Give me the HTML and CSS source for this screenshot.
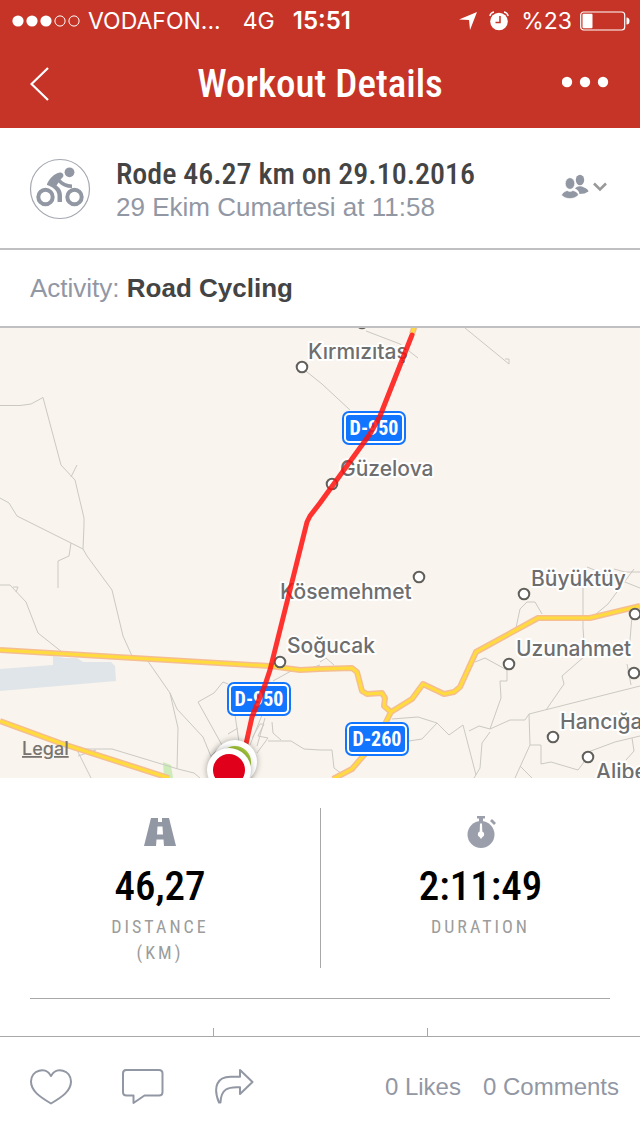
FILE: index.html
```html
<!DOCTYPE html>
<html lang="en">
<head>
<meta charset="utf-8">
<meta name="viewport" content="width=device-width, initial-scale=1">
<title>Workout Details</title>
<link rel="stylesheet" href="styles.css">
</head>
<body>
<div class="app">
  <header class="topbar">
    <div class="status">
      <svg class="signal" width="68" height="12" viewBox="0 0 68 12" aria-hidden="true">
        <g fill="#fff"><circle cx="6" cy="6" r="5.6"/><circle cx="20" cy="6" r="5.6"/><circle cx="34" cy="6" r="5.6"/></g>
        <g fill="none" stroke="#fff"><circle cx="48" cy="6" r="5.1"/><circle cx="62" cy="6" r="5.1"/></g>
      </svg>
      <span class="carrier">VODAFON...</span>
      <span class="network">4G</span>
      <span class="time">15:51</span>
      <svg class="location" width="18" height="18" viewBox="0 0 18 18" aria-hidden="true"><path d="M18 0 11 18 10 8 0 7.5Z" fill="#fff"/></svg>
      <svg class="alarm" width="20" height="20" viewBox="0 0 20 20" aria-hidden="true">
        <circle cx="10" cy="10.5" r="8.8" fill="#fff"/>
        <path d="M.8 5C1.300 3 3 1.300 5 1M19.200 5C18.700 3 17 1.300 15 1" fill="none" stroke="#fff" stroke-width="1.300"/>
        <path d="M11 5v6.500H6.500" fill="none" stroke="#c63427" stroke-width="1.500"/>
      </svg>
      <span class="percent">%23</span>
      <svg class="battery" width="50" height="20" viewBox="0 0 50 20" aria-hidden="true">
        <rect x=".7" y="1" width="44" height="18" rx="3" fill="none" stroke="#fff" stroke-width="1.200"/>
        <rect x="2.500" y="2.800" width="10" height="14.500" rx="1" fill="#fff"/>
        <path d="M46.500 6.500a3 3.500 0 0 1 0 7Z" fill="#fff"/>
      </svg>
    </div>
    <div class="nav">
      <button class="icon-button" aria-label="Back">
        <svg width="20" height="34" viewBox="0 0 20 34"><path d="M18 1 1.500 17 18 33" fill="none" stroke="#fff" stroke-width="2.200"/></svg>
      </button>
      <h1 class="title">Workout Details</h1>
      <button class="icon-button more" aria-label="More">
        <svg width="48" height="16" viewBox="0 0 48 16" fill="#fff"><circle cx="5" cy="6" r="5.200"/><circle cx="23" cy="6" r="5.200"/><circle cx="41" cy="6" r="5.200"/></svg>
      </button>
    </div>
  </header>

  <main class="content">
    <section class="summary">
      <svg class="avatar" width="62" height="62" viewBox="0 0 62 62" aria-hidden="true">
        <circle cx="31" cy="31" r="29.500" fill="none" stroke="#a5a8b1" stroke-width="1.200"/>
        <g fill="none" stroke="#9297a4" stroke-width="4"><circle cx="16.500" cy="39" r="7.200"/><circle cx="45.500" cy="39" r="7.200"/></g>
        <circle cx="40.500" cy="14.300" r="4.900" fill="#9297a4"/>
        <path d="M18 26C21 20 25 15.500 31 14.500 34 14.500 35 17 34 19L31.500 21.500C34 24.500 38 26 43 26.500V30C37 30 32.500 28 29.500 24.500L27.500 27.500C31 30 33 33 33 38V44H28.500V37C28 32 24 29 18 27Z" fill="#9297a4"/>
      </svg>
      <div class="summary-text">
        <h2 class="workout-name">Rode 46.27 km on 29.10.2016</h2>
        <p class="workout-date">29 Ekim Cumartesi at 11:58</p>
      </div>
      <button class="icon-button" aria-label="Privacy: friends">
        <svg width="48" height="30" viewBox="0 0 48 30">
          <g fill="#9297a4"><ellipse cx="19" cy="6" rx="4.200" ry="5.200"/><path d="M15 13.500Q19 11 23 13.500 27 15 27.500 17.500 24 20 18.500 20 18 16 14 14.500Z"/></g>
          <g fill="#9297a4" stroke="#fff" stroke-width=".6"><ellipse cx="9" cy="9.500" rx="4.700" ry="5.800"/><path d="M.5 21C2 18 4 17.500 6 16.500Q9 18.500 12 16.500C15 17.500 17 18.500 17.500 21 13 26 4 25.500.5 21Z"/></g>
          <path d="M33 9.500 39 15.500 45 9.500" fill="none" stroke="#999" stroke-width="2.600"/>
        </svg>
      </button>
    </section>

    <p class="activity">Activity: <strong>Road Cycling</strong></p>

    <svg class="map" viewBox="0 328 640 450" role="img" aria-label="Route map">
      <path d="M0 669 53 665V656L65 658H77L83 662H111L115 666 116 681 0 691Z" fill="#e0e5e9"/>
      <path d="M163 762 171 765 173 778H164Z" fill="#cdecb9"/>
      <g class="lane">
        <path d="M0 405.500H20L31 404 43 397.500 61 465 75 480 84 518V525L83 549 87 556 112 590 123 636 132 656M71 477 77 465M0 498 9 503 17 516 83 549M71 543 69 556 58 561V588"/>
        <path d="M0 585H10L26 602 38 633 62 652M13 587H18L16 592M145 657 170 693 178 728 177 769M170 693 177 709 203 737 212 759M91 778 78 752 80 749 96 749H112L178 769 194 773 200 778M78 756 96 750M243 778 246 740"/>
        <path d="M222 745 198 702 214 693 223 682 228 684M222 745 211 756M235 715 239 742M228 734 238 728M273 681 291 671M320 665 305 670M262 715 250 745M265 718 257 746M252 738 260 724H264L258 736 268 738 257 753M272 722 273 733 281 740M268 741 291 741 304 749 320 750"/>
        <path d="M302 368 322 384 350 410M366 331 400 344 418 358M465 328 509 364V359H505"/>
        <path d="M516 628 520 609 527 602H535L542 614M583 571V628L585 656 562 676 564 684 546 710M587 567 640 588M640 572H625L614 569M596 614 608 604 634 569M632 616 630 640 627 650M627 664 631 685M320 662 326 658 334 665M475 662 485 658 507 670V681H500L501 698 490 729M392 719 418 717 437 723 449 735 463 725 476 775M409 741 422 739 437 723M469 731 479 726 490 729 510 720H525L529 714 640 686M529 714 530 745 515 778M530 745H541V764L551 762 578 770 587 758M490 732 482 743 480 768 474 778M588 752 615 742 640 736M632 738 634 751 626 760M320 750H332L334 768 342 774M520 766 532 778"/>
      </g>
      <path class="road-edge" d="M0 650 270 666 300 670 320 669 352 668 357 672 362 691 367 694 382 693 385 698 384 706 391 712 412 699 423 684 444 694 454 692 460 687 476 652 538 618H590L640 606M391 712 377 740 352 769 333 779M0 721 60 743 169 778M412 334 415 325"/>
      <path class="road" d="M0 650 270 666 300 670 320 669 352 668 357 672 362 691 367 694 382 693 385 698 384 706 391 712 412 699 423 684 444 694 454 692 460 687 476 652 538 618H590L640 606M391 712 377 740 352 769 333 779M0 721 60 743 169 778M412 334 415 325"/>
      <g class="town">
        <circle cx="302" cy="367" r="5.300"/><circle cx="362" cy="323" r="5.300"/><circle cx="332" cy="484" r="5.300"/><circle cx="419" cy="577" r="5.300"/><circle cx="280" cy="662" r="5.300"/><circle cx="524" cy="594" r="5.300"/><circle cx="635" cy="614" r="5.300"/><circle cx="509" cy="664" r="5.300"/><circle cx="634" cy="673" r="5.300"/><circle cx="553" cy="737" r="5.300"/><circle cx="588" cy="757" r="5.300"/>
      </g>
      <g class="place">
        <text x="308" y="359">Kırmızıtaş</text><text x="340" y="476">Güzelova</text><text x="280" y="599">Kösemehmet</text><text x="287" y="653">Soğucak</text><text x="531" y="586">Büyüktüy</text><text x="516" y="656">Uzunahmet</text><text x="560" y="729">Hancığa</text><text x="596" y="779">Alibe</text>
      </g>
      <g class="shield">
        <rect x="342" y="411" width="64" height="34" rx="7"/><rect class="shield-line" x="345" y="414" width="58" height="28" rx="4"/><text x="374" y="435">D-950</text>
        <rect x="227" y="682" width="64" height="34" rx="7"/><rect class="shield-line" x="230" y="685" width="58" height="28" rx="4"/><text x="259" y="706">D-950</text>
        <rect x="345" y="722" width="64" height="34" rx="7"/><rect class="shield-line" x="348" y="725" width="58" height="28" rx="4"/><text x="377" y="746">D-260</text>
      </g>
      <path class="route" d="M412 335 380 416 370 434 320 503 310 516 307 522 299 554 270 670 265 685 252 717 246 744"/>
      <g class="pin">
        <circle cx="235" cy="762" r="22"/><circle cx="235" cy="762" r="16" fill="#a5c83b"/>
      </g>
      <g class="pin">
        <circle cx="229" cy="770" r="22"/><circle cx="229" cy="770" r="16" fill="#e0001b"/>
      </g>
      <a href="#legal"><text class="legal" x="22" y="755">Legal</text></a>
    </svg>

    <section class="stats">
      <div class="stat">
        <svg width="32" height="32" viewBox="0 0 32 32" aria-hidden="true"><path d="M7 2H25L32 30H0Z" fill="#9297a4"/><path d="M14 2H18V6H14ZM13.500 10.500H18.500L19 18.500H13ZM12.500 23.500H19.500L20 30H12Z" fill="#fff"/></svg>
        <strong class="value">46,27</strong>
        <span class="unit">DISTANCE<br>(KM)</span>
      </div>
      <div class="stat">
        <svg width="32" height="32" viewBox="0 0 32 32" aria-hidden="true"><g fill="#9b9fab"><circle cx="16" cy="18.500" r="13.500"/><path d="M12 0H20V2.500H18V6H14V2.500H12ZM27 3 31 7 29 9 25 5Z"/></g><path d="M15 7.500H17L17.300 15.500A3 3 0 0 1 17.500 21L16 23 14.500 21A3 3 0 0 1 14.700 15.500Z" fill="#fff"/></svg>
        <strong class="value">2:11:49</strong>
        <span class="unit">DURATION</span>
      </div>
    </section>
    <hr class="rule">
    <div class="stats-next"><div></div><div></div><div></div></div>
  </main>

  <footer class="actions">
    <button class="icon-button" aria-label="Like">
      <svg width="42" height="36" viewBox="0 0 42 36"><path d="M21 34.500C10 28 1 22 1 12.500 1 1 16-3 21 7 26-3 41 1 41 12.500 41 22 32 28 21 34.500Z"/></svg>
    </button>
    <button class="icon-button" aria-label="Comment">
      <svg width="42" height="36" viewBox="0 0 42 36"><path d="M4 1H37Q40.500 1 40.500 4.500V23Q40.500 26.500 37 26.500H22.500L11.500 34V26.500H4.500Q1 26.500 1 23V4.500Q1 1 4 1Z"/></svg>
    </button>
    <button class="icon-button" aria-label="Share">
      <svg width="42" height="36" viewBox="0 0 42 36"><path d="M26 1 38.500 13 26 25V18.300C14 17.500 7 20 6.500 33.500H5C-1 19 2 6.500 19 7.800H26Z"/></svg>
    </button>
    <div class="counts">
      <a class="count" href="#likes">0 Likes</a>
      <a class="count" href="#comments">0 Comments</a>
    </div>
  </footer>
</div>
</body>
</html>
```

FILE: styles.css
```css
* { box-sizing: border-box; }

body, h1, h2, p { margin: 0; }

body {
  background: #fff;
  color: #9297a4;
  font-family: "Liberation Sans", Arial, sans-serif;
  font-size: 26px;
}

svg {
  display: block;
  flex: none;
}

.app {
  display: flex;
  flex-direction: column;
  min-height: 100vh;
}

.icon-button {
  padding: 0;
  border: 0;
  background: none;
  cursor: pointer;
}

.topbar {
  background: #c63427;
  color: #fff;
}

.status {
  display: flex;
  align-items: center;
  height: 40px;
  padding: 2px 10px 0 12px;
  font: 23px/38px Inter, sans-serif;
  white-space: nowrap;
}

.carrier { margin-left: 8px; }
.network { margin-left: 22px; }
.time { margin-left: 18px; font-size: 24px; font-weight: 600; }
.location { margin-left: auto; }
.alarm { margin: 0 12px; }
.battery { margin-left: 8px; }

.nav {
  display: grid;
  grid-template-columns: 48px 1fr 48px;
  align-items: center;
  height: 88px;
  padding: 0 30px;
}

.title {
  text-align: center;
  font: 500 39px/48px "Roboto Condensed", "Liberation Sans Narrow", "Liberation Sans", sans-serif;
}

.summary {
  display: flex;
  align-items: center;
  height: 122px;
  padding: 2px 31px 0 29px;
  border-bottom: 2px solid #c0c0c2;
}

.summary-text {
  flex: 1;
  padding: 2px 0 0 25px;
}

.workout-name {
  color: #444;
  font: 500 30px/34px "Roboto Condensed", "Liberation Sans Narrow", "Liberation Sans", sans-serif;
}

.workout-date { line-height: 32px; }

.activity {
  padding: 0 30px;
  border-bottom: 2px solid #c0c0c2;
  line-height: 76px;
}

.activity strong { color: #444; }

.map {
  width: 100%;
  background: #f9f4ed;
}

.lane { fill: none; stroke: #cbc9c4; stroke-width: 1; }
.road-edge { fill: none; stroke: #f5bd91; stroke-width: 6; stroke-linejoin: round; }
.road { fill: none; stroke: #ffdc3c; stroke-width: 3; stroke-linejoin: round; }
.town { fill: #fff; stroke: #605f5b; stroke-width: 2; }

.place {
  fill: #6e6e6e;
  stroke: #fff;
  stroke-width: 4;
  stroke-linejoin: round;
  paint-order: stroke;
  font: 500 21px Inter, sans-serif;
}

.shield {
  fill: #1275ff;
  font: bold 20px "Roboto Condensed", "Liberation Sans Narrow", "Liberation Sans", sans-serif;
  text-anchor: middle;
}

.shield text { fill: #fff; }
.shield-line { fill: none; stroke: #fff; stroke-width: 2; }

.route {
  fill: none;
  stroke: #ff120e;
  stroke-width: 5;
  stroke-linejoin: round;
  stroke-linecap: round;
  opacity: 0.86;
}

.pin { fill: #fff; filter: drop-shadow(0 0 3px #0005); }

.legal {
  fill: #77736f;
  font: 500 18px Inter, sans-serif;
  text-decoration: underline;
}

.content {
  flex: 1;
  display: flex;
  flex-direction: column;
}

.stats {
  display: grid;
  grid-template-columns: 1fr 1fr;
  padding: 30px 0;
}

.stat {
  display: flex;
  flex-direction: column;
  align-items: center;
  min-height: 160px;
  padding-top: 8px;
}

.stat + .stat { border-left: 1px solid #a8a8a8; }

.value {
  margin: 12px 0 2px;
  color: #000;
  font: 500 41px/52px "Roboto Condensed", "Liberation Sans Narrow", "Liberation Sans", sans-serif;
}

.unit {
  color: #9c9c9c;
  font: 18px/26px "Roboto Condensed", "Liberation Sans Narrow", "Liberation Sans", sans-serif;
  letter-spacing: 3px;
  text-align: center;
}

.rule {
  align-self: stretch;
  margin: 0 30px;
  border: 0;
  border-top: 1px solid #a8a8a8;
}

.stats-next {
  flex: 1;
  display: grid;
  grid-template-columns: repeat(3, 1fr);
  min-height: 37px;
  padding-top: 29px;
}

.stats-next div + div { border-left: 1px solid #a8a8a8; }

.actions {
  display: flex;
  align-items: center;
  gap: 50px;
  height: 100px;
  padding: 0 21px 0 30px;
  border-top: 1px solid #a8a8a8;
}

.actions svg {
  fill: none;
  stroke: #9297a4;
  stroke-width: 2;
  stroke-linejoin: round;
}

.counts {
  display: flex;
  gap: 22px;
  margin-left: auto;
}

.count {
  color: #9297a4;
  font-size: 24px;
  text-decoration: none;
  white-space: nowrap;
}
```
